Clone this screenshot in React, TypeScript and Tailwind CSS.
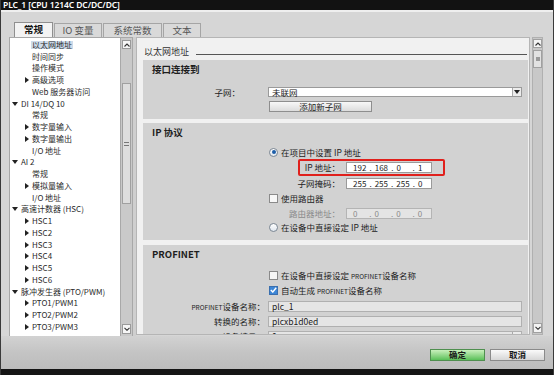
import React from 'react';

type TreeItem = { label: string; level: 1 | 2; arrow?: 'right' | 'down'; selected?: boolean };

const treeItems: TreeItem[] = [
  { label: '以太网地址', level: 2, selected: true },
  { label: '时间同步', level: 2 },
  { label: '操作模式', level: 2 },
  { label: '高级选项', level: 2, arrow: 'right' },
  { label: 'Web 服务器访问', level: 2 },
  { label: 'DI 14/DQ 10', level: 1, arrow: 'down' },
  { label: '常规', level: 2 },
  { label: '数字量输入', level: 2, arrow: 'right' },
  { label: '数字量输出', level: 2, arrow: 'right' },
  { label: 'I/O 地址', level: 2 },
  { label: 'AI 2', level: 1, arrow: 'down' },
  { label: '常规', level: 2 },
  { label: '模拟量输入', level: 2, arrow: 'right' },
  { label: 'I/O 地址', level: 2 },
  { label: '高速计数器 (HSC)', level: 1, arrow: 'down' },
  { label: 'HSC1', level: 2, arrow: 'right' },
  { label: 'HSC2', level: 2, arrow: 'right' },
  { label: 'HSC3', level: 2, arrow: 'right' },
  { label: 'HSC4', level: 2, arrow: 'right' },
  { label: 'HSC5', level: 2, arrow: 'right' },
  { label: 'HSC6', level: 2, arrow: 'right' },
  { label: '脉冲发生器 (PTO/PWM)', level: 1, arrow: 'down' },
  { label: 'PTO1/PWM1', level: 2, arrow: 'right' },
  { label: 'PTO2/PWM2', level: 2, arrow: 'right' },
  { label: 'PTO3/PWM3', level: 2, arrow: 'right' },
  { label: 'PTO4/PWM4', level: 2, arrow: 'right' },
];

function Arrow({ dir }: { dir: 'right' | 'down' }) {
  if (dir === 'right')
    return (
      <svg width="4" height="6" viewBox="0 0 4 6" className="shrink-0">
        <path d="M0 0L4 3L0 6Z" fill="#222" />
      </svg>
    );
  return (
    <svg width="6" height="4" viewBox="0 0 6 4" className="shrink-0">
      <path d="M0 0L6 0L3 4Z" fill="#222" />
    </svg>
  );
}

function Chevron({ up }: { up?: boolean }) {
  return (
    <svg width="6" height="4" viewBox="0 0 6 4">
      <path d={up ? 'M0.5 3.5L3 1L5.5 3.5' : 'M0.5 0.8L3 3.3L5.5 0.8'} fill="none" stroke="#333" strokeWidth="1.1" />
    </svg>
  );
}

function Radio({ checked }: { checked?: boolean }) {
  return (
    <span className="flex h-[9px] w-[9px] shrink-0 items-center justify-center rounded-full border border-[#7b8794] bg-gradient-to-b from-[#ffffff] to-[#dfe6ee]">
      {checked && <span className="h-[4px] w-[4px] rounded-full bg-[#1d5ea8]" />}
    </span>
  );
}

function Check({ checked }: { checked?: boolean }) {
  return (
    <span
      className={`flex h-[9px] w-[9px] shrink-0 items-center justify-center border ${
        checked ? 'border-[#3a6fae] bg-[#3d86d6]' : 'border-[#8a8a8a] bg-[#f7f7f7]'
      }`}
    >
      {checked && (
        <svg width="7" height="6" viewBox="0 0 7 6">
          <path d="M0.8 3L2.8 5L6.2 0.8" fill="none" stroke="#fff" strokeWidth="1.4" />
        </svg>
      )}
    </span>
  );
}

function IpField({ parts, disabled }: { parts: string[]; disabled?: boolean }) {
  return (
    <div
      className={`ml-[6px] flex h-[11px] w-[86px] items-center border pl-[6px] text-[8px] leading-none ${
        disabled ? 'border-[#b4b4b4] bg-[#e4e4e4] text-[#8a8a8a]' : 'border-[#9a9a9a] bg-white text-[#222]'
      }`}
    >
      {parts.map((p, i) => (
        <React.Fragment key={i}>
          <span className="w-[14px]">{p}</span>
          {i < parts.length - 1 && <span className="w-[9px] text-center">.</span>}
        </React.Fragment>
      ))}
    </div>
  );
}

function Section({ title, children, className }: { title: string; children: React.ReactNode; className: string }) {
  return (
    <div className={`mr-[1px] ml-[6px] bg-[#d2d2d2] ${className}`}>
      <div className="h-[16px] pl-[9px] pt-[1px] text-[9.5px] font-bold leading-[16px] text-[#1e1e1e]">{title}</div>
      {children}
    </div>
  );
}

export default function App() {
  return (
    <div className="flex h-[375px] w-[554px] flex-col overflow-hidden border-x border-[#3a3a3a] bg-[#d6d6d6] font-['Noto_Sans_CJK_SC','Noto_Sans',sans-serif] text-[#222]">
      {/* title bar */}
      <div className="h-[10px] shrink-0 bg-[#121212] pl-[2px] font-['Noto_Sans','Noto_Sans_CJK_SC',sans-serif] text-[8.5px] font-semibold leading-[10px] tracking-[-0.1px] text-white">
        PLC_1 [CPU 1214C DC/DC/DC]
      </div>
      <div className="h-[13px] shrink-0 border-t-2 border-[#efefef]" />

      {/* tabs */}
      <div className="flex h-[14px] shrink-0 items-end pl-[13px] text-[9.5px] leading-none">
        <div className="flex h-[15px] w-[39px] items-center justify-center border border-b-0 border-[#8f8f8f] bg-[#f3f3f3] font-bold text-[#111]">
          常规
        </div>
        <div className="ml-[1px] flex h-[14px] w-[48px] items-center justify-center border border-b-0 border-[#a5a5a5] bg-[#d9d9d9] text-[#555]">
          IO 变量
        </div>
        <div className="ml-[1px] flex h-[14px] w-[59px] items-center justify-center border border-b-0 border-[#a5a5a5] bg-[#d9d9d9] text-[#555]">
          系统常数
        </div>
        <div className="ml-[1px] flex h-[14px] w-[38px] items-center justify-center border border-b-0 border-[#a5a5a5] bg-[#d9d9d9] text-[#555]">
          文本
        </div>
      </div>

      {/* main */}
      <div className="flex h-[299px] shrink-0">
        <div className="w-[8px] shrink-0" />
        {/* tree */}
        <div className="w-[111px] shrink-0 overflow-hidden border-l border-t border-[#a8a8a8] bg-white pt-[1px] text-[8px] text-[#2a2a2a]">
          {treeItems.map((it, i) => (
            <div key={i} className="flex h-[11.75px] items-center whitespace-nowrap leading-none">
              {it.level === 1 ? (
                <>
                  <span className="ml-[2px] w-[9px]">
                    <Arrow dir="down" />
                  </span>
                  <span>{it.label}</span>
                </>
              ) : (
                <>
                  <span className="ml-[15px] w-[6px]">{it.arrow && <Arrow dir="right" />}</span>
                  <span className={it.selected ? 'bg-[#cddbea] px-[1px]' : 'px-[1px]'}>{it.label}</span>
                </>
              )}
            </div>
          ))}
        </div>
        {/* left scrollbar */}
        <div className="flex w-[13px] shrink-0 flex-col border-x border-t border-[#a8a8a8] bg-[#c9c9c9] px-[1px] pt-[2px]">
          <div className="flex h-[9px] items-center justify-center border border-[#9a9a9a] bg-[#f6f6f6]">
            <Chevron up />
          </div>
          <div className="h-[34px]" />
          <div className="flex h-[121px] items-center justify-center border border-[#a0a0a0] bg-[#dedede]">
            <div className="flex h-[4px] w-[5px] flex-col justify-between">
              <div className="h-px bg-[#777]" />
              <div className="h-px bg-[#777]" />
            </div>
          </div>
          <div className="flex-1" />
          <div className="mb-[2px] flex h-[10px] items-center justify-center border border-[#9a9a9a] bg-[#f6f6f6]">
            <Chevron />
          </div>
        </div>
        <div className="w-[3px] shrink-0 bg-[#cfcfcf]" />

        {/* right panel */}
        <div className="h-[298px] w-[394px] shrink-0 overflow-hidden border border-[#b5b5b5] bg-[#f1f1f1]">
          <div className="flex h-[22px] items-center pl-[7px] pt-[5px] text-[9px]">
            <span className="text-[#333]">以太网地址</span>
            <div className="ml-[7px] mr-[2px] mt-[5px] h-px flex-1 bg-[#555]" />
          </div>

          <Section title="接口连接到" className="h-[59px]">
            <div className="mt-[11px] flex h-[10px] items-center text-[8.5px]">
              <div className="w-[97px] text-right">子网：</div>
              <div className="ml-[28px] flex h-[10px] w-[254px] items-center justify-between border border-[#9a9a9a] bg-white pl-[3px] leading-none">
                <span>未联网</span>
                <span className="flex h-full w-[9px] items-center justify-center border-l border-[#aaa] bg-[#ececec]">
                  <Arrow dir="down" />
                </span>
              </div>
            </div>
            <div className="ml-[126px] mt-[4px] flex h-[11px] w-[103px] items-center justify-center border border-[#8e8e8e] bg-gradient-to-b from-[#f8f8f8] to-[#dcdcdc] text-[8.5px] leading-none">
              添加新子网
            </div>
          </Section>

          <Section title="IP 协议" className="mt-[4px] h-[117px]">
            <div className="ml-[126px] mt-[8px] flex h-[10px] items-center gap-[3px] text-[8.5px] leading-none">
              <Radio checked />
              <span>在项目中设置 IP 地址</span>
            </div>
            <div className="relative mt-[5px] flex h-[11px] items-center text-[8.5px] leading-none">
              <div className="w-[197px] text-right">IP 地址：</div>
              <IpField parts={['192', '168', '0', '1']} />
              <div className="absolute left-[155px] top-[-3px] h-[17px] w-[147px] rounded-[2px] border-2 border-[#e0201c]" />
            </div>
            <div className="mt-[5px] flex h-[11px] items-center text-[8.5px] leading-none">
              <div className="w-[197px] text-right">子网掩码：</div>
              <IpField parts={['255', '255', '255', '0']} />
            </div>
            <div className="ml-[126px] mt-[4px] flex h-[10px] items-center gap-[3px] text-[8.5px] leading-none">
              <Check />
              <span>使用路由器</span>
            </div>
            <div className="mt-[5px] flex h-[11px] items-center text-[8.5px] leading-none">
              <div className="w-[197px] text-right text-[#8a8a8a]">路由器地址：</div>
              <IpField parts={['0', '0', '0', '0']} disabled />
            </div>
            <div className="ml-[126px] mt-[3px] flex h-[10px] items-center gap-[3px] text-[8.5px] leading-none">
              <Radio />
              <span>在设备中直接设定 IP 地址</span>
            </div>
          </Section>

          <Section title="PROFINET" className="mt-[5px] h-[100px]">
            <div className="ml-[126px] mt-[9px] flex h-[10px] items-center gap-[3px] text-[8.5px] leading-none">
              <Check />
              <span>
                在设备中直接设定 <span className="text-[6.5px]">PROFINET</span>设备名称
              </span>
            </div>
            <div className="ml-[126px] mt-[5px] flex h-[10px] items-center gap-[3px] text-[8.5px] leading-none">
              <Check checked />
              <span>
                自动生成 <span className="text-[6.5px]">PROFINET</span>设备名称
              </span>
            </div>
            {[
              { label: 'PROFINET设备名称：', value: 'plc_1' },
              { label: '转换的名称：', value: 'plcxb1d0ed' },
              { label: '设备编号：', value: '0', select: true },
            ].map((row, i) => (
              <div key={i} className={`${i === 0 ? 'mt-[6px]' : 'mt-[4px]'} flex h-[11px] items-center text-[8.5px] leading-none`}>
                <div className="w-[122px] text-right">
                  {row.label.startsWith('PROFINET') ? (
                    <>
                      <span className="text-[6.5px]">PROFINET</span>设备名称：
                    </>
                  ) : (
                    row.label
                  )}
                </div>
                <div className="ml-[3px] flex h-[11px] w-[254px] items-center justify-between border border-[#b0b0b0] bg-[#e5e5e5] pl-[3px]">
                  <span>{row.value}</span>
                  {row.select && <span className="h-full w-[9px] border-l border-[#aaa] bg-[#ececec]" />}
                </div>
              </div>
            ))}
          </Section>
        </div>

        <div className="w-[2px] shrink-0" />
        {/* right scrollbar */}
        <div className="flex h-[298px] w-[11px] shrink-0 flex-col border border-[#b0b0b0] bg-[#c8c8c8] pt-[1px]">
          <div className="flex h-[9px] items-center justify-center border border-[#a0a0a0] bg-[#f4f4f4]">
            <Chevron up />
          </div>
          <div className="mt-[2px] flex h-[18px] items-center justify-center border border-[#a0a0a0] bg-[#e2e2e2]">
            <div className="h-[4px] w-[4px] bg-[#9a9a9a]" />
          </div>
          <div className="flex-1" />
          <div className="mb-[1px] flex h-[10px] items-center justify-center border border-[#a0a0a0] bg-[#f4f4f4]">
            <Chevron />
          </div>
        </div>
      </div>

      {/* bottom bar */}
      <div className="flex h-[33px] shrink-0 items-center justify-end gap-[5px] bg-gradient-to-b from-[#d2d2d2] via-[#c4c4c4] to-[#bcbcbc] pr-[8px] pt-[4px] text-[8.5px]">
        <div className="flex h-[12px] w-[55px] items-center justify-center border border-[#4f8f4f] bg-gradient-to-b from-[#c8f0bc] to-[#58c058] font-bold leading-none text-[#1a1a1a]">
          确定
        </div>
        <div className="flex h-[12px] w-[55px] items-center justify-center border border-[#8a8a8a] bg-gradient-to-b from-[#fafafa] to-[#d6d6d6] font-bold leading-none text-[#1a1a1a]">
          取消
        </div>
      </div>
      <div className="flex-1 bg-[#151515]" />
    </div>
  );
}
